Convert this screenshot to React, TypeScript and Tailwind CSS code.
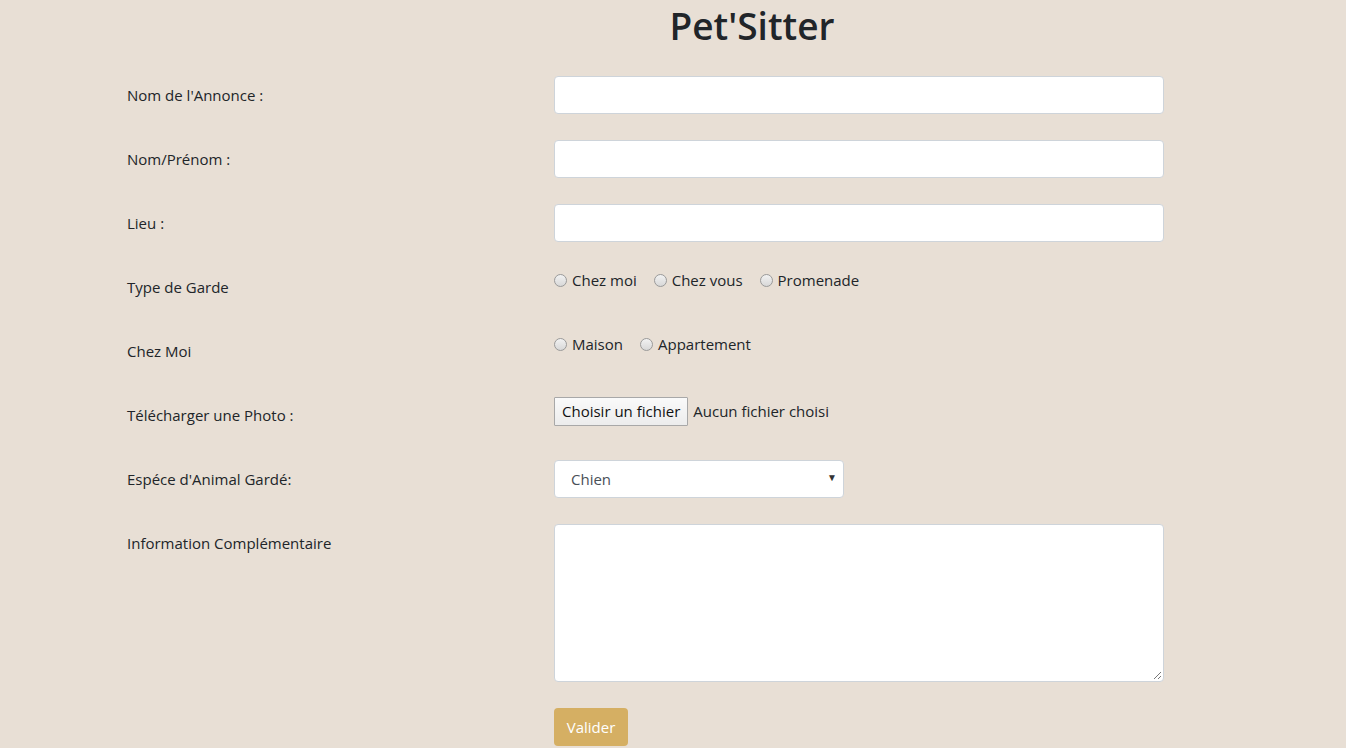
import React from "react";

const font = { fontFamily: '"Open Sans", "Noto Sans", sans-serif' };

function Radio({ label }: { label: string }) {
  return (
    <span className="flex items-center mr-[17px]">
      <span className="w-[13px] h-[13px] rounded-full border border-[#9a9a9a] bg-gradient-to-b from-[#f2f2f2] to-[#d8d8d8] mr-[5px]" />
      <span className="text-[15px] leading-[24px] text-[#212529]">{label}</span>
    </span>
  );
}

function Row({ label, children }: { label: string; children: React.ReactNode }) {
  return (
    <div className="flex mb-[26px]">
      <div className="w-[427px] text-[15px] leading-[24px] text-[#212529] pt-[7px] pb-[7px]">{label}</div>
      <div className="w-[610px]">{children}</div>
    </div>
  );
}

const input = "block w-[610px] h-[38px] bg-white border border-[#ced4da] rounded-[4px]";

export default function App() {
  return (
    <div className="min-h-[748px] w-full bg-[#e8dfd5]" style={font}>
      <h1 className="pl-[158px] text-center text-[37px] leading-[48px] font-semibold text-[#212529] pt-[2px] mb-[26px]">Pet'Sitter</h1>
      <div className="pl-[127px]">
        <Row label="Nom de l'Annonce :"><div className={input} /></Row>
        <Row label="Nom/Prénom :"><div className={input} /></Row>
        <Row label="Lieu :"><div className={input} /></Row>
        <Row label="Type de Garde">
          <div className="flex">
            <Radio label="Chez moi" />
            <Radio label="Chez vous" />
            <Radio label="Promenade" />
          </div>
        </Row>
        <Row label="Chez Moi">
          <div className="flex">
            <Radio label="Maison" />
            <Radio label="Appartement" />
          </div>
        </Row>
        <Row label="Télécharger une Photo :">
          <div className="flex items-center pt-[1px]">
            <span className="h-[29px] px-[7px] flex items-center border border-[#a8a8a8] bg-gradient-to-b from-[#fafafa] to-[#ececec] text-[15px] text-[#111] rounded-[1px]">Choisir un fichier</span>
            <span className="ml-[5px] text-[15px] text-[#212529]">Aucun fichier choisi</span>
          </div>
        </Row>
        <Row label="Espéce d'Animal Gardé:">
          <div className="relative w-[290px] h-[38px] bg-white border border-[#ced4da] rounded-[4px] flex items-center pl-[16px] text-[15px] text-[#495057]">
            Chien
            <span className="absolute right-[6px] top-[9px] text-[10px] text-[#333]">▼</span>
          </div>
        </Row>
        <Row label="Information Complémentaire">
          <div className="relative w-[610px] h-[158px] bg-white border border-[#ced4da] rounded-[4px]">
            <svg className="absolute right-[1px] bottom-[1px]" width="9" height="9" viewBox="0 0 9 9">
              <path d="M8 1L1 8M8 5L5 8" stroke="#777" strokeWidth="1" />
            </svg>
          </div>
        </Row>
        <div className="flex">
          <div className="w-[427px]" />
          <button className="h-[38px] w-[74px] rounded-[4px] bg-[#d5af63] text-white text-[15px]">Valider</button>
        </div>
      </div>
    </div>
  );
}
